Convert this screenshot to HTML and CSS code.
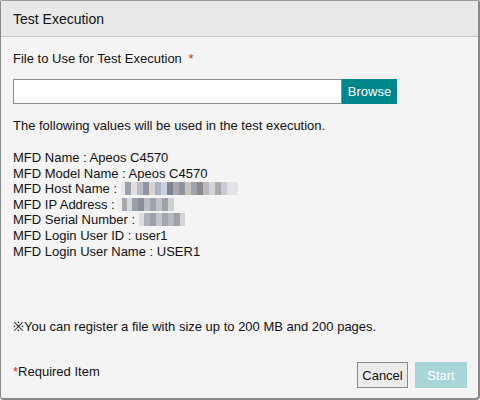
FILE: index.html
```html
<!DOCTYPE html>
<html>
<head>
<meta charset="utf-8">
<link rel="stylesheet" href="styles.css">
</head>
<body>
<div class="dialog">
  <div class="header">Test Execution</div>
  <div class="content">
    <div class="label">File to Use for Test Execution <span class="req">*</span></div>
    <div class="file-row">
      <input class="file-input" type="text">
      <button class="browse">Browse</button>
    </div>
    <p class="intro">The following values will be used in the test execution.</p>
    <div class="info">
      <div>MFD Name : Apeos C4570</div>
      <div>MFD Model Name : Apeos C4570</div>
      <div>MFD Host Name : <span class="blur blur-host"></span></div>
      <div>MFD IP Address : <span class="blur blur-ip"></span></div>
      <div>MFD Serial Number : <span class="blur blur-serial"></span></div>
      <div>MFD Login User ID : user1</div>
      <div>MFD Login User Name : USER1</div>
    </div>
    <p class="note">※You can register a file with size up to 200 MB and 200 pages.</p>
  </div>
  <div class="footer">
    <div class="required"><span class="req">*</span>Required Item</div>
    <div class="actions">
      <button class="cancel">Cancel</button>
      <button class="start" disabled>Start</button>
    </div>
  </div>
</div>
</body>
</html>
```

FILE: styles.css
```css
html, body {
  margin: 0;
  padding: 0;
  background: #f4f4f4;
}
.dialog {
  width: 480px;
  height: 400px;
  box-sizing: border-box;
  border-top: 1px solid #9a9a9a;
  border-left: 1px solid #8a8a8a;
  border-right: 2px solid #8a8a8a;
  border-bottom: 2px solid #8a8a8a;
  border-radius: 2px 2px 4px 4px;
  background: #f4f4f4;
  font-family: "Liberation Sans", Arial, sans-serif;
  font-size: 13px;
  color: #111;
  display: flex;
  flex-direction: column;
}
.header {
  height: 36px;
  box-sizing: border-box;
  background: #e9e9e9;
  border-bottom: 1px solid #c6c6c6;
  padding: 10px 0 0 12px;
  font-size: 14px;
  color: #111;
}
.content {
  padding: 14px 0 0 12px;
  flex: 1;
}
.label {
  line-height: 15px;
}
.req {
  color: #c8312a;
  margin-left: 3px;
}
.required .req {
  margin-left: 0;
}
.file-row {
  display: flex;
  margin-top: 13px;
  height: 25px;
}
.file-input {
  width: 329px;
  height: 25px;
  box-sizing: border-box;
  border: 1px solid #8c8c8c;
  background: #fff;
  margin: 0;
  padding: 0 4px;
  outline: none;
}
.browse {
  width: 55px;
  height: 25px;
  margin: 0;
  border: none;
  background: #00868d;
  color: #fff;
  font-family: "Liberation Sans", Arial, sans-serif;
  font-size: 13px;
  padding: 0;
}
.intro {
  margin: 14px 0 0;
  line-height: 15px;
}
.info {
  margin-top: 17px;
  line-height: 15.6px;
}
.blur {
  display: inline-block;
  height: 13px;
  vertical-align: -2px;
  filter: blur(0.6px);
}
.blur-host {
  width: 117px;
  background: linear-gradient(90deg, #e6e8ec 0 4px, #9aa2b0 4px 10px, #e0e0e2 10px 16px, #b7bcc6 16px 22px, #8f96a3 22px 28px, #d7d2cc 28px 34px, #a8b4c6 34px 40px, #c8d0dc 40px 46px, #7e8590 46px 52px, #a4a7ad 52px 58px, #8e949e 58px 64px, #c7c2bc 64px 70px, #9da5b2 70px 76px, #8d8a86 76px 82px, #b6bcc5 82px 88px, #d8d4cf 88px 94px, #a7aab0 94px 100px, #c9ccd2 100px 106px, #e3e3e5 106px 117px);
}
.blur-ip {
  width: 56px;
  background: linear-gradient(90deg, #eeeeee 0 4px, #a8aab2 4px 9px, #d9d9dc 9px 14px, #9aa0aa 14px 20px, #8b8f98 20px 26px, #b8bcc4 26px 32px, #a0a3aa 32px 38px, #c0c3c9 38px 44px, #9fa2a9 44px 50px, #cfd1d5 50px 56px);
}
.blur-serial {
  width: 46px;
  background: linear-gradient(90deg, #dcdde0 0 5px, #aeb1b8 5px 11px, #9ca0a8 11px 17px, #c2c5ca 17px 23px, #a3a6ad 23px 29px, #b6b9bf 29px 35px, #9fa2a9 35px 41px, #d3d4d7 41px 46px);
}
.note {
  margin: 60px 0 0;
  line-height: 15px;
}
.footer {
  display: flex;
  justify-content: space-between;
  align-items: center;
  padding: 0 11px 10px 12px;
}
.required {
  line-height: 15px;
  margin-top: -7px;
}
.actions {
  display: flex;
  gap: 7px;
}
.cancel, .start {
  height: 26px;
  font-family: "Liberation Sans", Arial, sans-serif;
  font-size: 13px;
  margin: 0;
  padding: 0;
}
.cancel {
  width: 51px;
  background: #ebebeb;
  border: 1px solid #8a8a8a;
  color: #111;
}
.start {
  width: 52px;
  background: #a8d5d8;
  border: none;
  color: #fff;
}
```
